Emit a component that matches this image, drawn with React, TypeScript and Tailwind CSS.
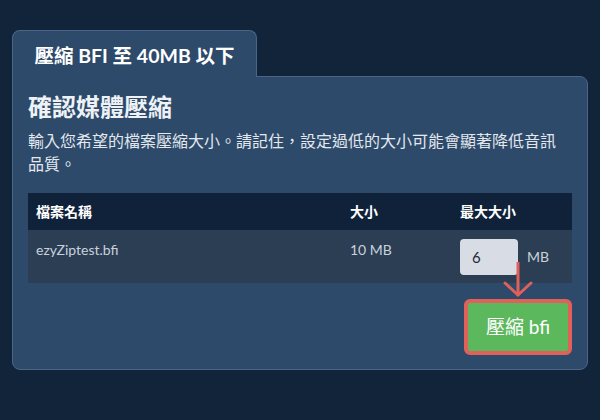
import React from 'react';

const Punct = ({ ch }: { ch: string }) => (
  <span className="inline-block w-[1em] text-center">{ch}</span>
);

const App = () => {
  const font = { fontFamily: 'Lato, "Noto Sans CJK TC", "Noto Sans", sans-serif' };

  return (
    <div lang="zh-Hant" className="w-[600px] h-[420px] bg-[#12243a] px-3 pt-[30px]" style={font}>
      {/* tab */}
      <div className="relative z-10 -mb-px flex h-[47px] w-[245px] items-center justify-center rounded-t-lg border border-b-0 border-[#4b6585] bg-[#2d4a6a] pt-[4px]">
        <span className="text-[19.5px] font-bold text-white">壓縮 BFI 至 40MB 以下</span>
      </div>

      {/* panel */}
      <div className="relative h-[294px] rounded-b-lg rounded-tr-lg border border-[#4b6585] bg-[#2d4a6a] px-[15px] pt-[14px]">
        <h2 className="text-[24px] font-bold leading-[32px] text-[#eef2f6]">確認媒體壓縮</h2>
        <p className="mt-[6px] text-[16px] leading-[23px] text-[#e3e8ee]" style={{ fontFamily: '"Noto Sans CJK TC", sans-serif' }}>
          輸入您希望的檔案壓縮大小<Punct ch="。" />請記住<Punct ch="，" />設定過低的大小可能會顯著降低音訊品質<Punct ch="。" />
        </p>

        <div className="mt-[18px]">
          <div className="grid h-[37px] grid-cols-[314px_110px_1fr] items-center bg-[#10223a] text-[14px] font-bold text-white">
            <span className="pl-2">檔案名稱</span>
            <span className="pl-2">大小</span>
            <span className="pl-2">最大大小</span>
          </div>
          <div className="grid h-[53px] grid-cols-[314px_110px_1fr] items-start bg-[#2c3e54] text-[14px] leading-[20px] text-[#c9d2dc]">
            <span className="pl-2 pt-[10px]">ezyZiptest.bfi</span>
            <span className="pl-2 pt-[10px]">10 MB</span>
            <div className="flex items-center gap-[9px] pl-2 pt-[9px]">
              <div className="flex h-[36px] w-[58px] items-center rounded-sm bg-[#d8dde5] pl-3 text-[15px] text-[#1f2937]">6</div>
              <span className="text-[14px] text-[#c9d2dc]">MB</span>
            </div>
          </div>
        </div>

        <div className="mt-4 flex justify-end">
          <button className="flex h-[56px] w-[108px] items-center justify-center rounded-md border-4 border-[#e0605a] bg-[#5cb85c] text-[19px] text-white">
            壓縮 bfi
          </button>
        </div>

        {/* annotation arrow */}
        <svg className="absolute left-[488px] top-[185px]" width="36" height="40" viewBox="0 0 36 40" fill="none">
          <path d="M17 0 V33" stroke="#e0605a" strokeWidth="3" strokeLinecap="round" />
          <path d="M4 21 L17 33 L30 21" stroke="#e0605a" strokeWidth="3" strokeLinecap="round" strokeLinejoin="round" />
        </svg>
      </div>
    </div>
  );
};

export default App;
